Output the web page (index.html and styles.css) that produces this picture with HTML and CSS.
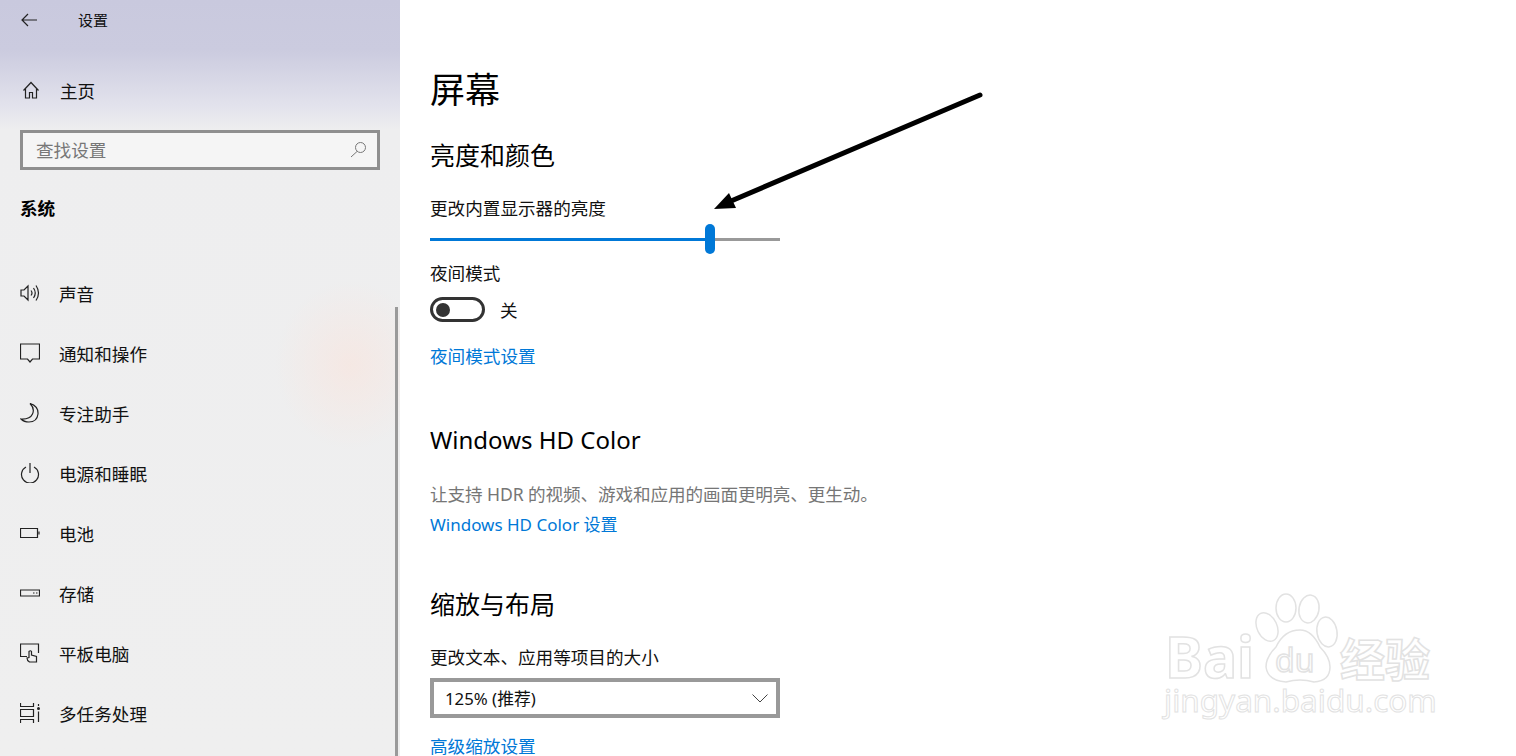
FILE: index.html
```html
<!DOCTYPE html>
<html lang="zh-CN">
<head>
    <meta charset="UTF-8">
    <title>设置</title>
    <link rel="stylesheet" href="styles.css">
</head>
<body>
    <div class="window">
        <aside class="sidebar">
            <div class="titlebar">
                <svg class="back" width="16" height="14" viewBox="0 0 16 14"><path d="M7 1 1 7l6 6M1 7h15"/></svg>
                <span class="app-name">设置</span>
            </div>
            <div class="nav-item home">
                <svg class="icon" width="20" height="20" viewBox="0 0 20 20"><path d="M2.5 10.5 10 2.5l7.500 8M4.500 9v9h4v-5.500h3V18h4V9"/></svg>
                <span>主页</span>
            </div>
            <div class="search">
                <span>查找设置</span>
                <svg class="search-icon" width="17" height="17" viewBox="0 0 17 17"><circle cx="10.500" cy="6.500" r="5"/><path d="M7 10.500 1 16"/></svg>
            </div>
            <div class="group-title">系统</div>
            <nav class="nav-list">
                <div class="nav-item">
                    <svg class="icon" width="20" height="20" viewBox="0 0 20 20"><path d="M1 7h3l4-4v14l-4-4H1zM11 7.500q2 2.500 0 5M13.500 5q3.500 5 0 10M16 2.500q5 7.500 0 15"/></svg>
                    <span>声音</span>
                </div>
                <div class="nav-item">
                    <svg class="icon" width="20" height="20" viewBox="0 0 20 20"><path d="M.5 1h19v15h-7l-2.500 3-2.500-3h-7z"/></svg>
                    <span>通知和操作</span>
                </div>
                <div class="nav-item">
                    <svg class="icon" width="20" height="20" viewBox="0 0 20 20"><path d="M10 .5Q18.500 3 18 11q-1 8-9 8-5 0-8-3 9 .500 11.500-5T10 .5z"/></svg>
                    <span>专注助手</span>
                </div>
                <div class="nav-item">
                    <svg class="icon" width="20" height="20" viewBox="0 0 20 20"><path d="M6 4a8.500 8.500 0 1 0 8 0M10 0v10"/></svg>
                    <span>电源和睡眠</span>
                </div>
                <div class="nav-item">
                    <svg class="icon" width="20" height="20" viewBox="0 0 20 20"><path d="M.5 5.500h17v9H.5zM19 8.500v3"/></svg>
                    <span>电池</span>
                </div>
                <div class="nav-item">
                    <svg class="icon" width="20" height="20" viewBox="0 0 20 20"><path d="M.5 7h19v6H.5zM13 10h1.500M16 10h1.500"/></svg>
                    <span>存储</span>
                </div>
                <div class="nav-item">
                    <svg class="icon" width="20" height="20" viewBox="0 0 20 20"><path d="M7 13.500H.5V1h18v9M9.500 19q-2.500-1.500-2.500-4l2-.5V8.500q1.500-1.500 2.500 0V12l5 1.500V19z"/></svg>
                    <span>平板电脑</span>
                </div>
                <div class="nav-item">
                    <svg class="icon" width="20" height="20" viewBox="0 0 20 20"><path d="M.500 0v3.500h13V0M.500 20v-3.500h13V20M.500 6.500h13v7H.500zM18.500 8.500V19M18.500 1v2"/><circle class="dot" cx="18.500" cy="5.500" r="1.500"/></svg>
                    <span>多任务处理</span>
                </div>
            </nav>
            <div class="scrollbar"></div>
        </aside>

        <main class="content">
            <h1>屏幕</h1>
            <h2>亮度和颜色</h2>
            <div class="label">更改内置显示器的亮度</div>
            <div class="slider">
                <div class="slider-fill"></div>
                <div class="slider-thumb"></div>
                <div class="slider-rest"></div>
            </div>
            <div class="label night-label">夜间模式</div>
            <div class="toggle-row">
                <div class="toggle"><div class="toggle-dot"></div></div>
                <span>关</span>
            </div>
            <a class="link night-link">夜间模式设置</a>

            <h2 class="hd-title">Windows HD Color</h2>
            <div class="desc">让支持 HDR 的视频、游戏和应用的画面更明亮、更生动。</div>
            <a class="link hd-link">Windows HD Color 设置</a>

            <h2 class="scale-title">缩放与布局</h2>
            <div class="label">更改文本、应用等项目的大小</div>
            <div class="dropdown">
                <span>125% (推荐)</span>
                <svg class="chevron" width="16" height="9" viewBox="0 0 16 9"><path d="M.5.5 8 8 15.500.5"/></svg>
            </div>
            <a class="link scale-link">高级缩放设置</a>
        </main>

        <svg class="pointer" width="1516" height="756" viewBox="0 0 1516 756">
            <path class="pointer-line" d="M980 95 724 204"/>
            <path class="pointer-head" d="M714 209 729 193 736 208z"/>
        </svg>

        <svg class="watermark" width="300" height="150" viewBox="0 0 300 150">
            <ellipse cx="117" cy="47" rx="10" ry="15" transform="rotate(-25 117 47)"/>
            <ellipse cx="136" cy="28" rx="10" ry="14"/>
            <ellipse cx="159" cy="29" rx="10" ry="14" transform="rotate(10 159 29)"/>
            <ellipse cx="177" cy="52" rx="10" ry="15" transform="rotate(-10 177 52)"/>
            <path d="M150 50q12 0 20 17 10 10 10 20 0 14-16 15-14-4-28 0-18-1-20-15 0-10 10-20 8-17 24-17z"/>
            <text class="wm-big" x="15" y="98">Bai</text>
            <text class="wm-du" x="125" y="92">du</text>
            <text class="wm-cn" x="190" y="97">经验</text>
            <text class="wm-url" x="14" y="132">jingyan.baidu.com</text>
        </svg>
    </div>
</body>
</html>
```

FILE: styles.css
```css
html, body {
    margin: 0;
    padding: 0;
    height: 100%;
    overflow: hidden;
}
body {
    font-family: "Noto Sans", "Noto Sans CJK SC", sans-serif;
    background-color: white;
    color: #111;
}
.window {
    position: relative;
    display: flex;
    width: 1516px;
    height: 756px;
    overflow: hidden;
}

/* 左侧栏 */
.sidebar {
    position: relative;
    width: 400px;
    flex-shrink: 0;
    box-sizing: border-box;
    padding-left: 20px;
    font-size: 17.6px;
    background:
        radial-gradient(ellipse 75px 85px at 350px 365px, rgba(255, 222, 210, 0.4), rgba(255, 222, 210, 0)),
        linear-gradient(#c9c9de 0, #cbcbdf 50px, #e2e2ec 105px, #eeeeef 130px, #efefef 756px);
}
.titlebar {
    display: flex;
    align-items: center;
    height: 39px;
}
.back {
    margin-left: 1px;
    fill: none;
    stroke: #222;
    stroke-width: 1.2;
}
.app-name {
    margin-left: 41px;
    font-size: 15px;
}
.nav-item {
    display: flex;
    align-items: center;
    gap: 19px;
    height: 60px;
}
.home {
    margin-top: 21px;
}
.home .icon {
    margin-left: 1px;
}
.icon {
    flex-shrink: 0;
    fill: none;
    stroke: #222;
    stroke-width: 1.2;
}
.icon .dot {
    fill: #222;
    stroke: none;
}
.search {
    display: flex;
    align-items: center;
    justify-content: space-between;
    box-sizing: border-box;
    width: 360px;
    height: 40px;
    margin-top: 10px;
    padding: 0 10px 2px 13px;
    border: 3px solid #8f8f8f;
    background: #f5f5f5;
    color: #777;
}
.search-icon {
    fill: none;
    stroke: #777;
    stroke-width: 1;
}
.group-title {
    margin-top: 25px;
    line-height: 26px;
    font-weight: bold;
    color: black;
}
.nav-list {
    margin-top: 42px;
}
.scrollbar {
    position: absolute;
    left: 395px;
    top: 307px;
    bottom: 0;
    width: 3px;
    background: #9a9a9a;
}

/* 内容 */
.content {
    flex: 1;
    padding: 65px 0 0 30px;
    font-size: 17.6px;
}
h1 {
    margin: 0;
    font-size: 35px;
    font-weight: normal;
    line-height: 50px;
    color: black;
}
h2 {
    margin: 23px 0 0;
    font-size: 25px;
    font-weight: normal;
    line-height: 34px;
    color: black;
}
.label {
    margin-top: 23px;
    line-height: 26px;
}
.slider {
    display: flex;
    align-items: center;
    width: 350px;
    height: 30px;
    margin-top: 3px;
}
.slider-fill {
    width: 275px;
    height: 3px;
    background: #0078d7;
}
.slider-thumb {
    width: 10px;
    height: 30px;
    border-radius: 5px;
    background: #0078d7;
}
.slider-rest {
    flex: 1;
    height: 3px;
    background: #999;
}
.night-label {
    margin-top: 6px;
}
.toggle-row {
    display: flex;
    align-items: center;
    gap: 15px;
    height: 25px;
    margin-top: 11px;
}
.toggle {
    display: flex;
    align-items: center;
    box-sizing: border-box;
    width: 55px;
    height: 25px;
    padding-left: 3px;
    border: 3px solid #333;
    border-radius: 13px;
}
.toggle-dot {
    width: 14px;
    height: 14px;
    border-radius: 50%;
    background: #333;
}
.link {
    display: block;
    line-height: 26px;
    color: #0078d7;
}
.night-link {
    margin-top: 21px;
}
.hd-title {
    margin-top: 54px;
    font-size: 24px;
}
.desc {
    margin-top: 24px;
    line-height: 26px;
    letter-spacing: -0.1px;
    color: #767676;
}
.hd-link {
    margin-top: 5px;
    font-size: 17px;
}
.scale-title {
    margin-top: 49px;
}
.dropdown {
    display: flex;
    align-items: center;
    justify-content: space-between;
    box-sizing: border-box;
    width: 350px;
    height: 40px;
    margin-top: 8px;
    padding: 0 8px 0 11px;
    border: 4px solid #999;
    font-size: 16.8px;
}
.chevron {
    fill: none;
    stroke: #444;
    stroke-width: 1;
}
.scale-link {
    margin-top: 15px;
}

/* 标注箭头 */
.pointer {
    position: absolute;
    left: 0;
    top: 0;
    pointer-events: none;
}
.pointer-line {
    fill: none;
    stroke: black;
    stroke-width: 5;
    stroke-linecap: round;
}
.pointer-head {
    fill: black;
}

/* 水印 */
.watermark {
    position: absolute;
    left: 1150px;
    top: 580px;
    fill: white;
    stroke: #e2e2e2;
    stroke-width: 1.5;
}
.watermark text {
    font-family: "Noto Sans", "Noto Sans CJK SC", sans-serif;
}
.wm-big {
    font-size: 57px;
    font-weight: bold;
}
.wm-du {
    font-size: 32px;
}
.wm-cn {
    font-size: 45px;
    font-weight: bold;
}
.wm-url {
    font-size: 31.5px;
    stroke-width: 1;
}
```
